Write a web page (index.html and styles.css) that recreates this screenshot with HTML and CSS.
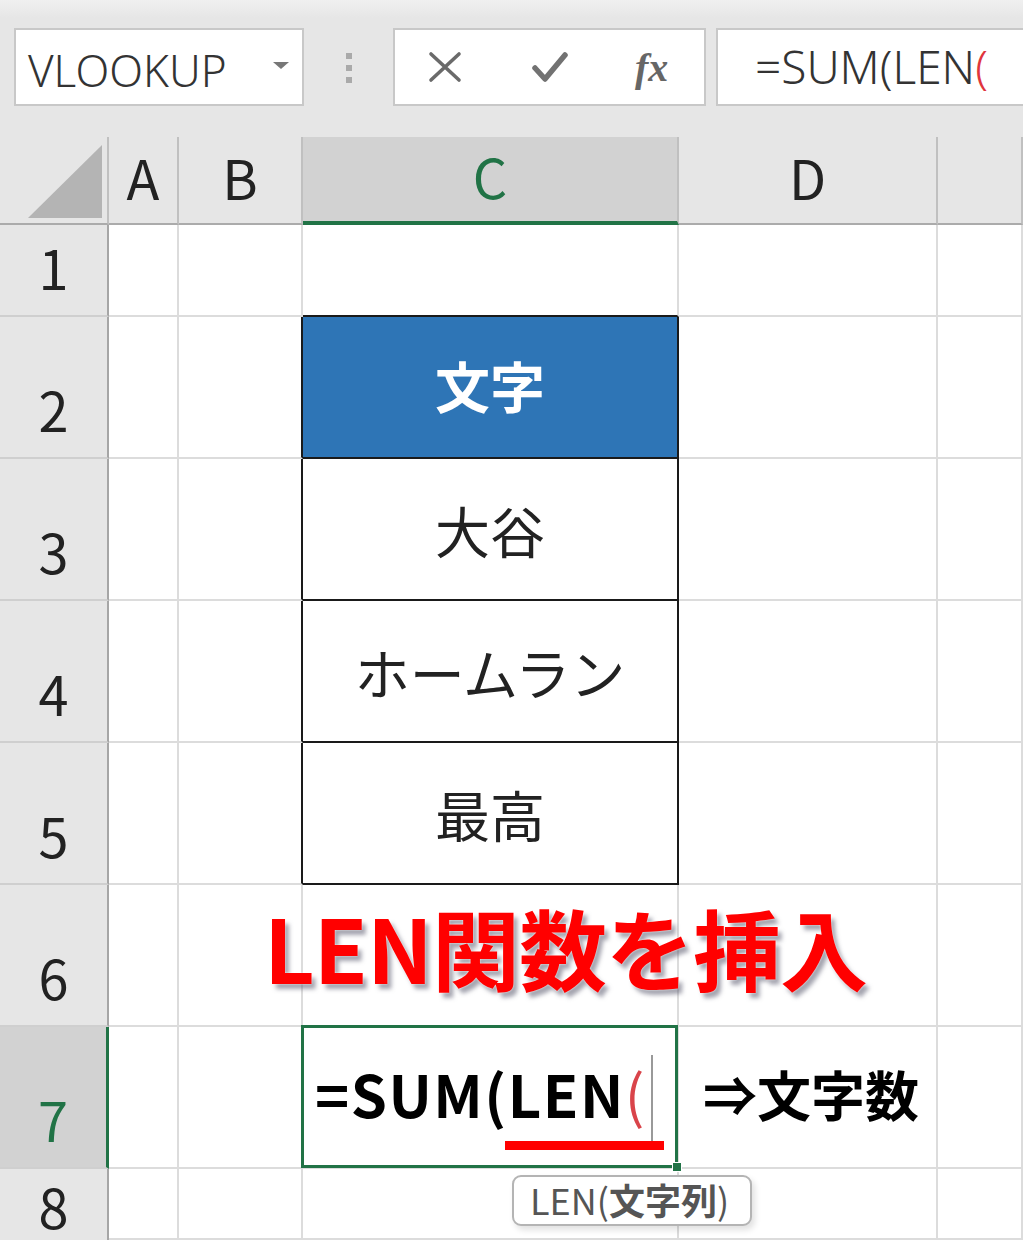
FILE: index.html
```html
<!DOCTYPE html>
<html lang="ja">
<head>
    <meta charset="UTF-8">
    <meta name="viewport" content="width=device-width, initial-scale=1.0">
    <title>LEN関数を挿入</title>
    <link rel="stylesheet" href="styles.css">
</head>
<body>
    <div class="toolbar">
        <div class="namebox">
            <span class="name">VLOOKUP</span>
            <span class="arrow"></span>
        </div>
        <div class="dots"><i></i><i></i><i></i></div>
        <div class="fxbox">
            <svg class="icon" width="34" height="32" viewBox="0 0 34 32">
                <path d="M3 3 L31 29 M31 3 L3 29" stroke="#6a6a6a" stroke-width="3.6" stroke-linecap="round" fill="none"/>
            </svg>
            <svg class="icon" width="36" height="32" viewBox="0 0 36 32">
                <path d="M3 17 L13 28 L33 4" stroke="#727272" stroke-width="5.5" stroke-linejoin="round" stroke-linecap="round" fill="none"/>
            </svg>
            <span class="fx">fx</span>
        </div>
        <div class="formula">=SUM(LEN<span class="red">(</span></div>
    </div>

    <div class="sheet">
        <!-- header row -->
        <div class="corner">
            <svg width="108" height="88" viewBox="0 0 108 88">
                <polygon points="28,81 102,81 102,8" fill="#b4b4b4"/>
            </svg>
        </div>
        <div class="colhead">A</div>
        <div class="colhead">B</div>
        <div class="colhead active">C</div>
        <div class="colhead">D</div>
        <div class="colhead"></div>

        <!-- row 1 -->
        <div class="rowhead">1</div>
        <div class="cell"></div>
        <div class="cell"></div>
        <div class="cell edge-b"></div>
        <div class="cell"></div>
        <div class="cell"></div>

        <!-- row 2 -->
        <div class="rowhead">2</div>
        <div class="cell"></div>
        <div class="cell edge-r"></div>
        <div class="cell tbl head">文字</div>
        <div class="cell"></div>
        <div class="cell"></div>

        <!-- row 3 -->
        <div class="rowhead">3</div>
        <div class="cell"></div>
        <div class="cell edge-r"></div>
        <div class="cell tbl">大谷</div>
        <div class="cell"></div>
        <div class="cell"></div>

        <!-- row 4 -->
        <div class="rowhead">4</div>
        <div class="cell"></div>
        <div class="cell edge-r"></div>
        <div class="cell tbl">ホームラン</div>
        <div class="cell"></div>
        <div class="cell"></div>

        <!-- row 5 -->
        <div class="rowhead">5</div>
        <div class="cell"></div>
        <div class="cell edge-r"></div>
        <div class="cell tbl">最高</div>
        <div class="cell"></div>
        <div class="cell"></div>

        <!-- row 6 -->
        <div class="rowhead">6</div>
        <div class="cell"></div>
        <div class="cell"></div>
        <div class="cell"></div>
        <div class="cell"></div>
        <div class="cell"></div>

        <!-- row 7 -->
        <div class="rowhead active">7</div>
        <div class="cell"></div>
        <div class="cell"></div>
        <div class="cell selected">
            <span class="entry">=SUM(LEN<span class="red">(</span></span>
            <span class="caret"></span>
            <span class="underline"></span>
            <span class="handle"></span>
        </div>
        <div class="cell note">⇒文字数</div>
        <div class="cell"></div>

        <!-- row 8 -->
        <div class="rowhead last">8</div>
        <div class="cell"></div>
        <div class="cell"></div>
        <div class="cell"></div>
        <div class="cell"></div>
        <div class="cell"></div>

        <div class="title">LEN関数を挿入</div>
        <div class="tooltip">LEN(<b>文字列</b>)</div>
    </div>
</body>
</html>
```

FILE: styles.css
```css
body {
    margin: 0;
    background-color: #e6e6e6;
    font-family: "Noto Sans CJK JP", "Noto Sans", sans-serif;
    overflow: hidden;
    height: 1240px;
}

/* formula bar */
.toolbar {
    height: 137px;
    box-sizing: border-box;
    padding: 28px 0 0 14px;
    display: flex;
    align-items: flex-start;
    background: linear-gradient(#f0f0f0 0px, #e6e6e6 18px);
}
.namebox {
    width: 290px;
    height: 78px;
    box-sizing: border-box;
    background-color: #fff;
    border: 2px solid #c8c8c8;
    display: flex;
    align-items: center;
    padding: 5px 0 0 12px;
    position: relative;
}
.name {
    font-family: "Noto Sans", sans-serif;
    font-size: 44px;
    font-weight: 300;
    color: #333;
}
.arrow {
    position: absolute;
    left: 257px;
    top: 32px;
    border-left: 8px solid transparent;
    border-right: 8px solid transparent;
    border-top: 7px solid #777;
}
.dots {
    width: 89px;
    display: flex;
    flex-direction: column;
    align-items: center;
    gap: 6px;
    padding-top: 25px;
}
.dots i {
    display: block;
    width: 6px;
    height: 6px;
    background-color: #aaa;
}
.fxbox {
    width: 313px;
    height: 78px;
    box-sizing: border-box;
    background-color: #fff;
    border: 2px solid #c8c8c8;
    display: flex;
    align-items: center;
    padding-left: 33px;
    gap: 70px;
}
.fx {
    font-family: "Liberation Serif", serif;
    font-style: italic;
    font-weight: 700;
    font-size: 40px;
    color: #666;
    margin-left: -3px;
}
.formula {
    margin-left: 10px;
    flex: 1;
    height: 78px;
    box-sizing: border-box;
    background-color: #fff;
    border: 2px solid #c8c8c8;
    border-right: none;
    padding-left: 37px;
    font-family: "Noto Sans", sans-serif;
    font-size: 46px;
    font-weight: 300;
    line-height: 72px;
    color: #333;
    white-space: nowrap;
}
.red {
    color: #e0363c;
}

/* grid */
.sheet {
    position: relative;
    display: grid;
    grid-template-columns: 109px 70px 124px 376px 259px 85px;
    grid-template-rows: 88px 92px repeat(6, 142px) 71px;
}
.corner {
    background-color: #e6e6e6;
    border-bottom: 2px solid #ababab;
    border-right: 2px solid #c0c0c0;
    box-sizing: border-box;
}
.corner svg {
    display: block;
}
.colhead {
    background-color: #e6e6e6;
    border-right: 2px solid #c0c0c0;
    border-bottom: 2px solid #ababab;
    box-sizing: border-box;
    display: flex;
    align-items: center;
    justify-content: center;
    font-size: 54px;
    line-height: 1;
    color: #222;
    padding-bottom: 7px;
}
.colhead.active {
    background-color: #d2d2d2;
    color: #217346;
    border-bottom: 4px solid #217346;
}
.rowhead {
    background-color: #e6e6e6;
    border-right: 2px solid #a6a6a6;
    border-bottom: 2px solid #cfcfcf;
    box-sizing: border-box;
    display: flex;
    align-items: flex-end;
    justify-content: center;
    font-size: 54px;
    line-height: 1;
    color: #222;
    padding-bottom: 21px;
}
.rowhead.active {
    background-color: #d2d2d2;
    color: #217346;
    border-right: 3px solid #217346;
}
.rowhead.last {
    align-items: flex-start;
    padding: 10px 0 0;
    border-bottom: none;
}
.cell {
    background-color: #fff;
    border-right: 2px solid #dcdcdc;
    border-bottom: 2px solid #dcdcdc;
    box-sizing: border-box;
    display: flex;
    align-items: center;
    justify-content: center;
    font-size: 55px;
    color: #222;
    white-space: nowrap;
}
.cell.edge-b {
    border-bottom-color: #1a1a1a;
}
.cell.edge-r {
    border-right-color: #1a1a1a;
}
.cell.tbl {
    border-right-color: #1a1a1a;
    border-bottom-color: #1a1a1a;
}
.cell.head {
    background-color: #2e75b6;
    color: #fff;
    font-weight: 700;
    padding-bottom: 6px;
}

/* selected cell C7 */
.cell.selected {
    position: relative;
    justify-content: flex-start;
    padding-left: 12px;
    padding-bottom: 8px;
}
.cell.selected::after {
    content: "";
    position: absolute;
    left: -2px;
    top: -2px;
    right: -1px;
    bottom: -1px;
    border: 3px solid #217346;
}
.entry {
    font-weight: 700;
    font-size: 58px;
    letter-spacing: 1.5px;
    color: #000;
}
.entry .red {
    font-weight: 400;
    color: #d9444a;
}
.caret {
    position: absolute;
    left: 348px;
    top: 28px;
    width: 2px;
    height: 86px;
    background-color: #999;
}
.underline {
    position: absolute;
    left: 202px;
    top: 114px;
    width: 159px;
    height: 9px;
    background-color: #ff0000;
}
.handle {
    position: absolute;
    right: -5px;
    bottom: -5px;
    width: 8px;
    height: 8px;
    background-color: #217346;
    border: 1px solid #fff;
    z-index: 2;
}
.cell.note {
    justify-content: flex-start;
    padding-left: 24px;
    padding-bottom: 8px;
    font-weight: 700;
    font-size: 54px;
    color: #000;
}

/* overlays */
.title {
    position: absolute;
    left: 264px;
    top: 745px;
    font-size: 88px;
    font-weight: 700;
    color: #ff0000;
    white-space: nowrap;
    letter-spacing: -1px;
    text-shadow: 0 0 2px #fff, 4px 5px 4px rgba(90, 90, 110, 0.55);
}
.tooltip {
    position: absolute;
    left: 512px;
    top: 1038px;
    width: 240px;
    height: 51px;
    box-sizing: border-box;
    background-color: #fff;
    border: 2px solid #b4b4b4;
    border-radius: 9px;
    box-shadow: 3px 4px 6px rgba(0, 0, 0, 0.12);
    font-family: "Noto Sans CJK JP", sans-serif;
    font-size: 36px;
    line-height: 44px;
    color: #555;
    padding-left: 16px;
    white-space: nowrap;
}
.tooltip b {
    font-weight: 700;
}
```
